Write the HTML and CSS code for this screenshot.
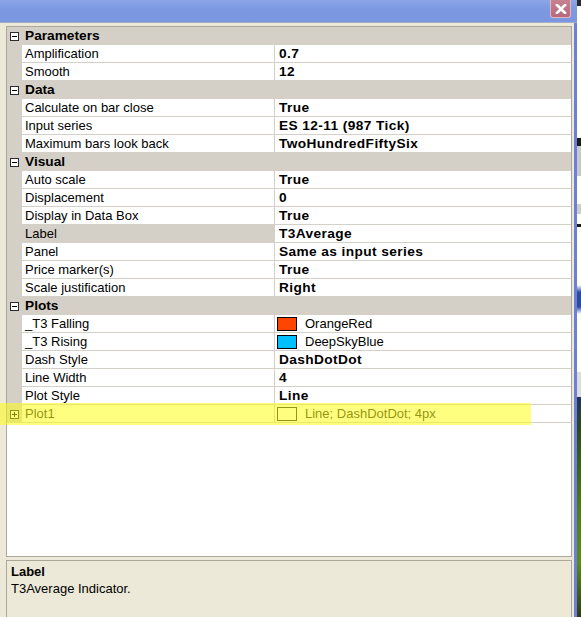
FILE: index.html
```html
<!DOCTYPE html>
<html>
<head>
<meta charset="utf-8">
<link rel="stylesheet" href="styles.css">
</head>
<body>
<div class="screen">
  <div class="main">
    <div class="titlebar">
      <div class="close">
        <svg width="12" height="10" viewBox="0 0 12 10"><path d="M2 1 L10 9 M10 1 L2 9" stroke="#fff" stroke-width="2.6" stroke-linecap="square"/></svg>
      </div>
    </div>
    <div class="client">
      <div class="grid">
        <div class="cat"><span class="box"><span class="h"></span></span><span class="cat-name">Parameters</span></div>
        <div class="prop"><div class="gut"></div><div class="name">Amplification</div><div class="val">0.7</div></div>
        <div class="prop"><div class="gut"></div><div class="name">Smooth</div><div class="val">12</div></div>
        <div class="cat"><span class="box"><span class="h"></span></span><span class="cat-name">Data</span></div>
        <div class="prop"><div class="gut"></div><div class="name">Calculate on bar close</div><div class="val">True</div></div>
        <div class="prop"><div class="gut"></div><div class="name">Input series</div><div class="val">ES 12-11 (987 Tick)</div></div>
        <div class="prop"><div class="gut"></div><div class="name">Maximum bars look back</div><div class="val">TwoHundredFiftySix</div></div>
        <div class="cat"><span class="box"><span class="h"></span></span><span class="cat-name">Visual</span></div>
        <div class="prop"><div class="gut"></div><div class="name">Auto scale</div><div class="val">True</div></div>
        <div class="prop"><div class="gut"></div><div class="name">Displacement</div><div class="val">0</div></div>
        <div class="prop"><div class="gut"></div><div class="name">Display in Data Box</div><div class="val">True</div></div>
        <div class="prop"><div class="gut"></div><div class="name selected">Label</div><div class="val">T3Average</div></div>
        <div class="prop"><div class="gut"></div><div class="name">Panel</div><div class="val">Same as input series</div></div>
        <div class="prop"><div class="gut"></div><div class="name">Price marker(s)</div><div class="val">True</div></div>
        <div class="prop"><div class="gut"></div><div class="name">Scale justification</div><div class="val">Right</div></div>
        <div class="cat"><span class="box"><span class="h"></span></span><span class="cat-name">Plots</span></div>
        <div class="prop"><div class="gut"></div><div class="name">_T3 Falling</div><div class="val plain"><span class="swatch orange"></span>OrangeRed</div></div>
        <div class="prop"><div class="gut"></div><div class="name">_T3 Rising</div><div class="val plain"><span class="swatch blue"></span>DeepSkyBlue</div></div>
        <div class="prop"><div class="gut"></div><div class="name">Dash Style</div><div class="val">DashDotDot</div></div>
        <div class="prop"><div class="gut"></div><div class="name">Line Width</div><div class="val">4</div></div>
        <div class="prop"><div class="gut"></div><div class="name">Plot Style</div><div class="val">Line</div></div>
        <div class="prop disabled"><div class="gut"><span class="box"><span class="h"></span><span class="v"></span></span></div><div class="name">Plot1</div><div class="val plain"><span class="swatch empty"></span>Line; DashDotDot; 4px</div></div>
      </div>
      <div class="desc">
        <div class="desc-title">Label</div>
        <div class="desc-text">T3Average Indicator.</div>
      </div>
    </div>
  </div>
  <div class="outside">
    <div class="o o1"></div>
    <div class="o o2"></div>
    <div class="o o3"></div>
    <div class="o o4"></div>
    <div class="o o5"></div>
    <div class="o o6"></div>
    <div class="o o7"></div>
    <div class="o o8"></div>
    <div class="o o9"></div>
    <div class="o o10"></div>
    <div class="o o11"></div>
  </div>
</div>
<div class="highlight"></div>
</body>
</html>
```

FILE: styles.css
```css
html, body {
  margin: 0;
  padding: 0;
}
body {
  width: 581px;
  height: 617px;
  overflow: hidden;
  position: relative;
  font-family: "Liberation Sans", Arial, sans-serif;
  font-size: 13px;
  color: #000;
  background: #ece9d8;
}
.screen {
  display: flex;
  width: 581px;
  height: 617px;
}
.main {
  width: 577px;
  display: flex;
  flex-direction: column;
}
.titlebar {
  height: 22px;
  border-bottom: 1px solid #a3abc6;
  background: linear-gradient(#8ba6e8, #7b98e0 45%, #7a97df);
  display: flex;
  justify-content: flex-end;
  align-items: flex-start;
  padding-right: 6px;
}
.close {
  width: 19px;
  height: 17px;
  background: linear-gradient(#c88290, #b9687a);
  border: 1px solid #e4b6c0;
  border-top: none;
  border-radius: 0 0 3px 3px;
  display: flex;
  align-items: center;
  justify-content: center;
}
.client {
  flex: 1;
  display: flex;
  flex-direction: column;
  padding: 3px 2px 0 6px;
  border-right: 3px solid #6b80d6;
  background: #ece9d8;
  min-height: 0;
}
.grid {
  height: 529px;
  border: 1px solid #aca899;
  background: #fff;
  display: flex;
  flex-direction: column;
  flex-shrink: 0;
}
.cat {
  height: 18px;
  background: #d4d0c8;
  display: flex;
  align-items: center;
  font-weight: bold;
  font-size: 13.7px;
}
.cat .box {
  margin-left: 3px;
  margin-right: 6px;
}
.box {
  width: 7px;
  height: 7px;
  border: 1px solid #2b2b2b;
  background: #fff;
  position: relative;
  display: inline-block;
  flex-shrink: 0;
}
.box .h {
  position: absolute;
  left: 1px;
  top: 3px;
  width: 5px;
  height: 1px;
  background: #000;
}
.box .v {
  position: absolute;
  left: 3px;
  top: 1px;
  width: 1px;
  height: 5px;
  background: #000;
}
.cat-name {
  line-height: 18px;
}
.prop {
  display: flex;
  height: 18px;
}
.gut {
  width: 15px;
  background: #d4d0c8;
  display: flex;
  align-items: center;
}
.gut .box {
  margin-left: 3px;
}
.name {
  width: 249px;
  padding-left: 3px;
  line-height: 17px;
  border-right: 1px solid #d4d0c8;
  border-bottom: 1px solid #d4d0c8;
  white-space: nowrap;
}
.name.selected {
  background: #d4d0c8;
}
.val {
  flex: 1;
  padding-left: 4px;
  line-height: 17px;
  font-weight: bold;
  font-size: 13.7px;
  letter-spacing: 0.4px;
  border-bottom: 1px solid #d4d0c8;
  display: flex;
  align-items: center;
  white-space: nowrap;
}
.val.plain {
  font-weight: normal;
  font-size: 13px;
  letter-spacing: 0;
  padding-left: 2px;
}
.swatch {
  width: 18px;
  height: 12px;
  border: 1px solid #000;
  margin-right: 8px;
  flex-shrink: 0;
}
.swatch.orange { background: #ff4500; }
.swatch.blue { background: #00bfff; }
.swatch.empty { background: #fff; border-color: #2a2a2a; }
.disabled .name, .disabled .val {
  color: #2a2a2a;
}
.desc {
  margin-top: 3px;
  flex: 1;
  border: 1px solid #aca899;
  border-bottom: none;
  background: #ece9d8;
  padding: 3px 0 0 4px;
}
.desc-title {
  font-weight: bold;
  line-height: 16px;
}
.desc-text {
  line-height: 18px;
}
.outside {
  width: 4px;
  display: flex;
  flex-direction: column;
  background: #fff;
}
.o1 { height: 6px; background: #2a2a2a; }
.o2 { height: 132px; background: #fff; }
.o3 { height: 8px; background: #1c1c1c; }
.o4 { height: 30px; background: #c9c9c9; }
.o5 { height: 28px; background: #fff; }
.o6 { height: 10px; background: #cdcdcd; }
.o7 { height: 10px; background: #fff; }
.o8 { height: 3px; background: #1a1a1a; }
.o9 { height: 145px; background: linear-gradient(#fff 0, #fff 40%, #2f4c9c 45%, #2f4c9c 55%, #fff 60%); }
.o10 { height: 25px; background: #dcdcdc; }
.o11 { flex: 1; background: linear-gradient(#223454, #2e4a22 15%, #4f7a20 50%, #5d8a24 75%, #2e3a1c); }
.highlight {
  position: absolute;
  left: 0;
  top: 403px;
  width: 531px;
  height: 22px;
  background: rgba(255, 255, 0, 0.5);
}
```
